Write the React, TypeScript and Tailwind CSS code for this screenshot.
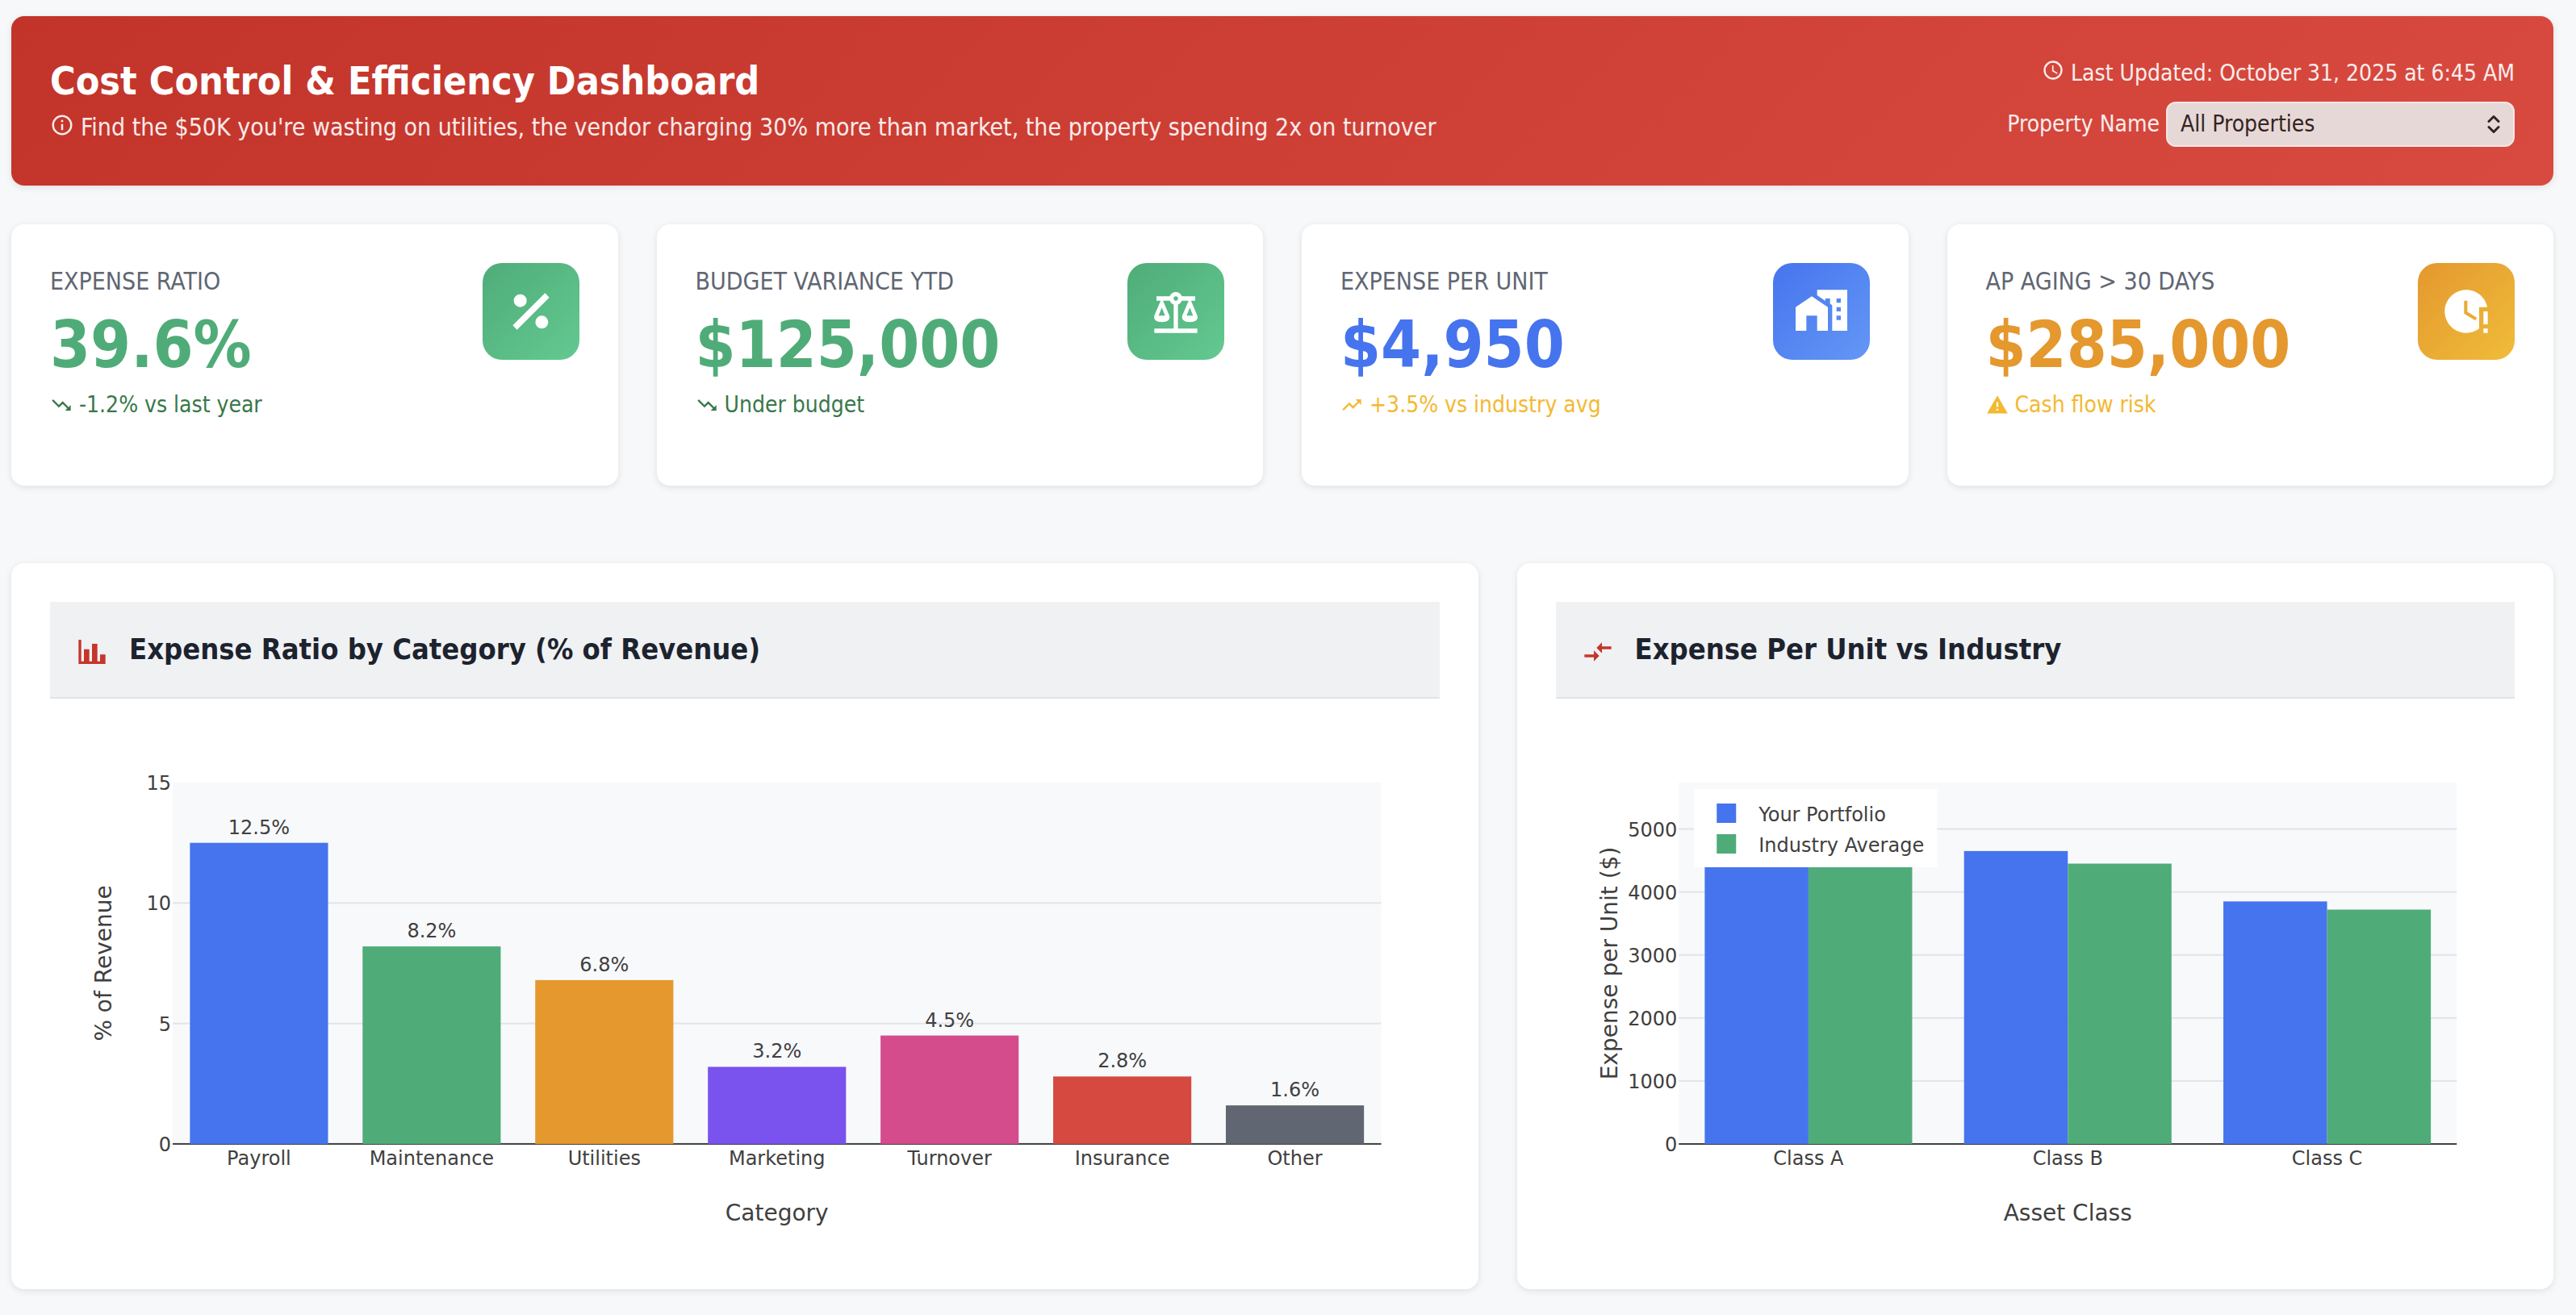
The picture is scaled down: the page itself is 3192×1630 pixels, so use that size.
import { useState } from "react";

const ICONS = {
  info: "M11,9H13V7H11M12,20C7.59,20 4,16.41 4,12C4,7.59 7.59,4 12,4C16.41,4 20,7.59 20,12C20,16.41 16.41,20 12,20M12,2A10,10 0 0,0 2,12A10,10 0 0,0 12,22A10,10 0 0,0 22,12A10,10 0 0,0 12,2M11,17H13V11H11V17Z",
  clock:
    "M12,20A8,8 0 0,0 20,12A8,8 0 0,0 12,4A8,8 0 0,0 4,12A8,8 0 0,0 12,20M12,2A10,10 0 0,1 22,12A10,10 0 0,1 12,22C6.47,22 2,17.5 2,12A10,10 0 0,1 12,2M12.5,7V12.25L17,14.92L16.25,16.15L11,13V7H12.5Z",
  percent:
    "M18.5,3.5L20.5,5.5L5.5,20.5L3.5,18.5L18.5,3.5M7,4A3,3 0 0,1 10,7A3,3 0 0,1 7,10A3,3 0 0,1 4,7A3,3 0 0,1 7,4M17,14A3,3 0 0,1 20,17A3,3 0 0,1 17,20A3,3 0 0,1 14,17A3,3 0 0,1 17,14Z",
  scale:
    "M12,3C10.73,3 9.6,3.8 9.18,5H3V7H4.95L2,14C1.53,16 3,17 5.5,17C8,17 9.56,16 9,14L6.05,7H9.17C9.5,7.85 10.15,8.5 11,8.83V20H2V22H22V20H13V8.82C13.85,8.5 14.5,7.85 14.82,7H17.95L15,14C14.53,16 16,17 18.5,17C21,17 22.56,16 22,14L19.05,7H21V5H14.83C14.4,3.8 13.27,3 12,3M12,5A1,1 0 0,1 13,6A1,1 0 0,1 12,7A1,1 0 0,1 11,6A1,1 0 0,1 12,5M5.5,10.25L7,14H4L5.5,10.25M18.5,10.25L20,14H17L18.5,10.25Z",
  homeCity:
    "M10,2V4.5L13.8,7.1V6H16V8.4L17,9.1V21H24V2H10M19,6H21V8H19V6M19,10H21V12H19V10M19,14H21V16H19V14M7.5,5L0,10V21H5V14H10V21H15V10L7.5,5Z",
  clockAlert:
    "M12,2C6.5,2 2,6.5 2,12C2,17.5 6.5,22 12,22C14.25,22 16.33,21.24 18,20V10H21.8C20.87,5.38 16.8,2 12,2M12.5,7V12.2L17,14.9L16.2,16.2L11,13V7H12.5M20,12V18H22V12H20M20,20V22H22V20H20Z",
  trendDown:
    "M16,18L18.29,15.71L13.41,10.83L9.41,14.83L2,7.41L3.41,6L9.41,12L13.41,8L19.71,14.29L22,12V18H16Z",
  trendUp:
    "M16,6L18.29,8.29L13.41,13.17L9.41,9.17L2,16.59L3.41,18L9.41,12L13.41,16L19.71,9.71L22,12V6H16Z",
  alert: "M13,14H11V9H13M13,18H11V16H13M1,21H23L12,2L1,21Z",
  chartBar: "M22,21H2V3H4V19H6V10H10V19H12V6H16V19H18V14H22V21Z",
  compare: "M9,14H2V16H9V19L13,15L9,11V14M15,13V10H22V8H15V5L11,9L15,13Z",
};

type IconName = keyof typeof ICONS;

function Icon({ name, className }: { name: IconName; className: string }) {
  return (
    <svg viewBox="0 0 24 24" fill="currentColor" fillRule="evenodd" aria-hidden="true" className={`shrink-0 ${className}`}>
      <path d={ICONS[name]} />
    </svg>
  );
}

interface Kpi {
  label: string;
  value: string;
  note: string;
  noteIcon: IconName;
  icon: IconName;
  valueColor: string;
  noteColor: string;
  tile: string;
}

const KPIS: Kpi[] = [
  {
    label: "EXPENSE RATIO",
    value: "39.6%",
    note: "-1.2% vs last year",
    noteIcon: "trendDown",
    icon: "percent",
    valueColor: "text-[#4fac78]",
    noteColor: "text-[#38784a]",
    tile: "from-[#4fac78] to-[#63c991]",
  },
  {
    label: "BUDGET VARIANCE YTD",
    value: "$125,000",
    note: "Under budget",
    noteIcon: "trendDown",
    icon: "scale",
    valueColor: "text-[#4fac78]",
    noteColor: "text-[#38784a]",
    tile: "from-[#4fac78] to-[#63c991]",
  },
  {
    label: "EXPENSE PER UNIT",
    value: "$4,950",
    note: "+3.5% vs industry avg",
    noteIcon: "trendUp",
    icon: "homeCity",
    valueColor: "text-[#4674ee]",
    noteColor: "text-[#f3b931]",
    tile: "from-[#4674ee] to-[#6497f5]",
  },
  {
    label: "AP AGING > 30 DAYS",
    value: "$285,000",
    note: "Cash flow risk",
    noteIcon: "alert",
    icon: "clockAlert",
    valueColor: "text-[#e4982e]",
    noteColor: "text-[#f3b931]",
    tile: "from-[#e4982e] to-[#efbc3a]",
  },
];

const CATEGORIES = [
  { name: "Payroll", value: 12.5, color: "#4674ee" },
  { name: "Maintenance", value: 8.2, color: "#4fac78" },
  { name: "Utilities", value: 6.8, color: "#e4982e" },
  { name: "Marketing", value: 3.2, color: "#7a52ee" },
  { name: "Turnover", value: 4.5, color: "#d44c8c" },
  { name: "Insurance", value: 2.8, color: "#d64940" },
  { name: "Other", value: 1.6, color: "#606672" },
];

const CLASSES = [
  { name: "Class A", portfolio: 5450, industry: 5200 },
  { name: "Class B", portfolio: 4650, industry: 4450 },
  { name: "Class C", portfolio: 3850, industry: 3720 },
];

// Plot area inside each chart
const LEFT = 152;
const RIGHT = 72;
const TOP = 104;
const PLOT_H = 448;
const BASE = TOP + PLOT_H;

interface PlotProps {
  width: number;
  max: number;
  ticks: number[];
  xTitle: string;
  yTitle: string;
  names: string[];
  children: React.ReactNode;
}

function Plot({ width, max, ticks, xTitle, yTitle, names, children }: PlotProps) {
  const plotW = width - LEFT - RIGHT;
  const step = plotW / names.length;
  const mid = TOP + PLOT_H / 2;
  return (
    <svg
      viewBox={`0 0 ${width} 684`}
      role="img"
      aria-label={`${yTitle} by ${xTitle}`}
      className="block h-[684px] w-full fill-[#404040] font-['DejaVu_Sans',Verdana,sans-serif] text-[24px]"
    >
      <rect x={LEFT} y={TOP} width={plotW} height={PLOT_H} fill="#f8f9fb" />
      {ticks.map((t) => {
        const y = BASE - (t / max) * PLOT_H;
        return (
          <g key={t}>
            {t > 0 && t < max && <rect x={LEFT} y={y - 1} width={plotW} height={2} fill="#e2e4e7" />}
            <text x={LEFT - 2} y={y + 9} textAnchor="end">
              {t}
            </text>
          </g>
        );
      })}
      <rect x={LEFT} y={BASE - 1} width={plotW} height={2} />
      {children}
      {names.map((n, i) => (
        <text key={n} x={LEFT + step * (i + 0.5)} y={BASE + 26} textAnchor="middle">
          {n}
        </text>
      ))}
      <text x={LEFT + plotW / 2} y={BASE + 95} textAnchor="middle" className="text-[28px]">
        {xTitle}
      </text>
      <text transform={`translate(76 ${mid}) rotate(-90)`} textAnchor="middle" className="text-[28px]">
        {yTitle}
      </text>
    </svg>
  );
}

function CategoryChart() {
  const width = 1722;
  const max = 15;
  const step = (width - LEFT - RIGHT) / CATEGORIES.length;
  return (
    <Plot
      width={width}
      max={max}
      ticks={[0, 5, 10, 15]}
      xTitle="Category"
      yTitle="% of Revenue"
      names={CATEGORIES.map((c) => c.name)}
    >
      {CATEGORIES.map((c, i) => {
        const h = (c.value / max) * PLOT_H;
        return (
          <g key={c.name}>
            <rect x={LEFT + step * (i + 0.1)} y={BASE - h} width={step * 0.8} height={h} fill={c.color} />
            <text x={LEFT + step * (i + 0.5)} y={BASE - h - 11} textAnchor="middle">
              {c.value}%
            </text>
          </g>
        );
      })}
    </Plot>
  );
}

function ClassChart() {
  const width = 1188;
  const max = 5737;
  const step = (width - LEFT - RIGHT) / CLASSES.length;
  return (
    <Plot
      width={width}
      max={max}
      ticks={[0, 1000, 2000, 3000, 4000, 5000]}
      xTitle="Asset Class"
      yTitle="Expense per Unit ($)"
      names={CLASSES.map((c) => c.name)}
    >
      {CLASSES.map((c, i) => {
        const a = (c.portfolio / max) * PLOT_H;
        const b = (c.industry / max) * PLOT_H;
        return (
          <g key={c.name}>
            <rect x={LEFT + step * (i + 0.1)} y={BASE - a} width={step * 0.4} height={a} fill="#4674ee" />
            <rect x={LEFT + step * (i + 0.5)} y={BASE - b} width={step * 0.4} height={b} fill="#4fac78" />
          </g>
        );
      })}
      {/* Legend */}
      <rect x={171} y={112} width={301} height={97} fill="#fff" />
      <rect x={199} y={130} width={24} height={24} fill="#4674ee" />
      <text x={251} y={152}>
        Your Portfolio
      </text>
      <rect x={199} y={168} width={24} height={24} fill="#4fac78" />
      <text x={251} y={190}>
        Industry Average
      </text>
    </Plot>
  );
}

function KpiCard({ kpi }: { kpi: Kpi }) {
  return (
    <article className="flex items-start justify-between rounded-2xl bg-white px-12 pt-12 pb-[82px] shadow-[0_2px_8px_rgba(0,0,0,0.1)]">
      <div>
        <h2 className="text-[30px] leading-[46px] text-[#606672]">{kpi.label}</h2>
        <p className={`text-[80px] leading-[112px] font-bold ${kpi.valueColor}`}>{kpi.value}</p>
        <p className={`flex items-center gap-2 text-[28px] leading-9 ${kpi.noteColor}`}>
          <Icon name={kpi.noteIcon} className="size-7" />
          {kpi.note}
        </p>
      </div>
      <div className={`flex size-[120px] shrink-0 items-center justify-center rounded-3xl bg-linear-135 text-white ${kpi.tile}`}>
        <Icon name={kpi.icon} className="size-16" />
      </div>
    </article>
  );
}

function ChartCard({
  title,
  icon,
  className,
  children,
}: {
  title: string;
  icon: IconName;
  className: string;
  children: React.ReactNode;
}) {
  return (
    <section className={`rounded-2xl bg-white p-12 shadow-[0_2px_8px_rgba(0,0,0,0.1)] ${className}`}>
      <header className="flex h-[120px] items-center gap-[26px] border-b-2 border-[#e1e3e6] bg-[#f0f1f3] px-8">
        <Icon name={icon} className="mt-1.5 size-10 text-[#c5362c]" />
        <h2 className="text-[36px] leading-[54px] font-bold text-[#1c232e]">{title}</h2>
      </header>
      {children}
    </section>
  );
}

export default function App() {
  const [property, setProperty] = useState("All Properties");

  return (
    <div className="min-h-screen bg-[#f7f8fa] pt-5 pr-7 pb-8 pl-3.5 font-['DejaVu_Sans_Condensed',Tahoma,Verdana,sans-serif]">
      <header className="flex items-start justify-between rounded-2xl bg-linear-135 from-[#c2342a] to-[#d84a40] p-12 text-white shadow-[0_2px_8px_rgba(0,0,0,0.1)]">
        <div>
          <h1 className="text-[48px] leading-[64px] font-bold">Cost Control &amp; Efficiency Dashboard</h1>
          <p className="mt-0.5 flex items-center gap-2 text-[30px] leading-[48px] text-white/90">
            <Icon name="info" className="mb-1.5 size-[30px]" />
            Find the $50K you're wasting on utilities, the vendor charging 30% more than market, the property spending
            2x on turnover
          </p>
        </div>
        <div className="flex flex-col items-end gap-3 text-[28px] text-white/90">
          <p className="flex items-center gap-2 leading-[46px]">
            <Icon name="clock" className="mb-2 size-7" />
            Last Updated: October 31, 2025 at 6:45 AM
          </p>
          <div className="flex items-center gap-2">
            <label htmlFor="property">Property Name</label>
            <div className="relative">
              <select
                id="property"
                value={property}
                onChange={(e) => setProperty(e.target.value)}
                className="h-14 w-[432px] appearance-none rounded-xl border-2 border-[#f6e6e5] bg-[#e6d8d7] pl-4 text-[28px] text-[#352322]"
              >
                <option>All Properties</option>
              </select>
              <svg
                viewBox="0 0 16 28"
                aria-hidden="true"
                className="pointer-events-none absolute top-3.5 right-[18px] h-7 w-4 fill-none stroke-[#352322] stroke-3"
                strokeLinecap="round"
                strokeLinejoin="round"
              >
                <path d="M2 10.5L8 4.5L14 10.5M2 17.5L8 23.5L14 17.5" />
              </svg>
            </div>
          </div>
        </div>
      </header>

      <div className="mt-12 grid grid-cols-4 gap-12">
        {KPIS.map((kpi) => (
          <KpiCard key={kpi.label} kpi={kpi} />
        ))}
      </div>

      <div className="mt-24 grid grid-cols-12 gap-12">
        <ChartCard title="Expense Ratio by Category (% of Revenue)" icon="chartBar" className="col-span-7">
          <CategoryChart />
        </ChartCard>
        <ChartCard title="Expense Per Unit vs Industry" icon="compare" className="col-span-5">
          <ClassChart />
        </ChartCard>
      </div>
    </div>
  );
}
